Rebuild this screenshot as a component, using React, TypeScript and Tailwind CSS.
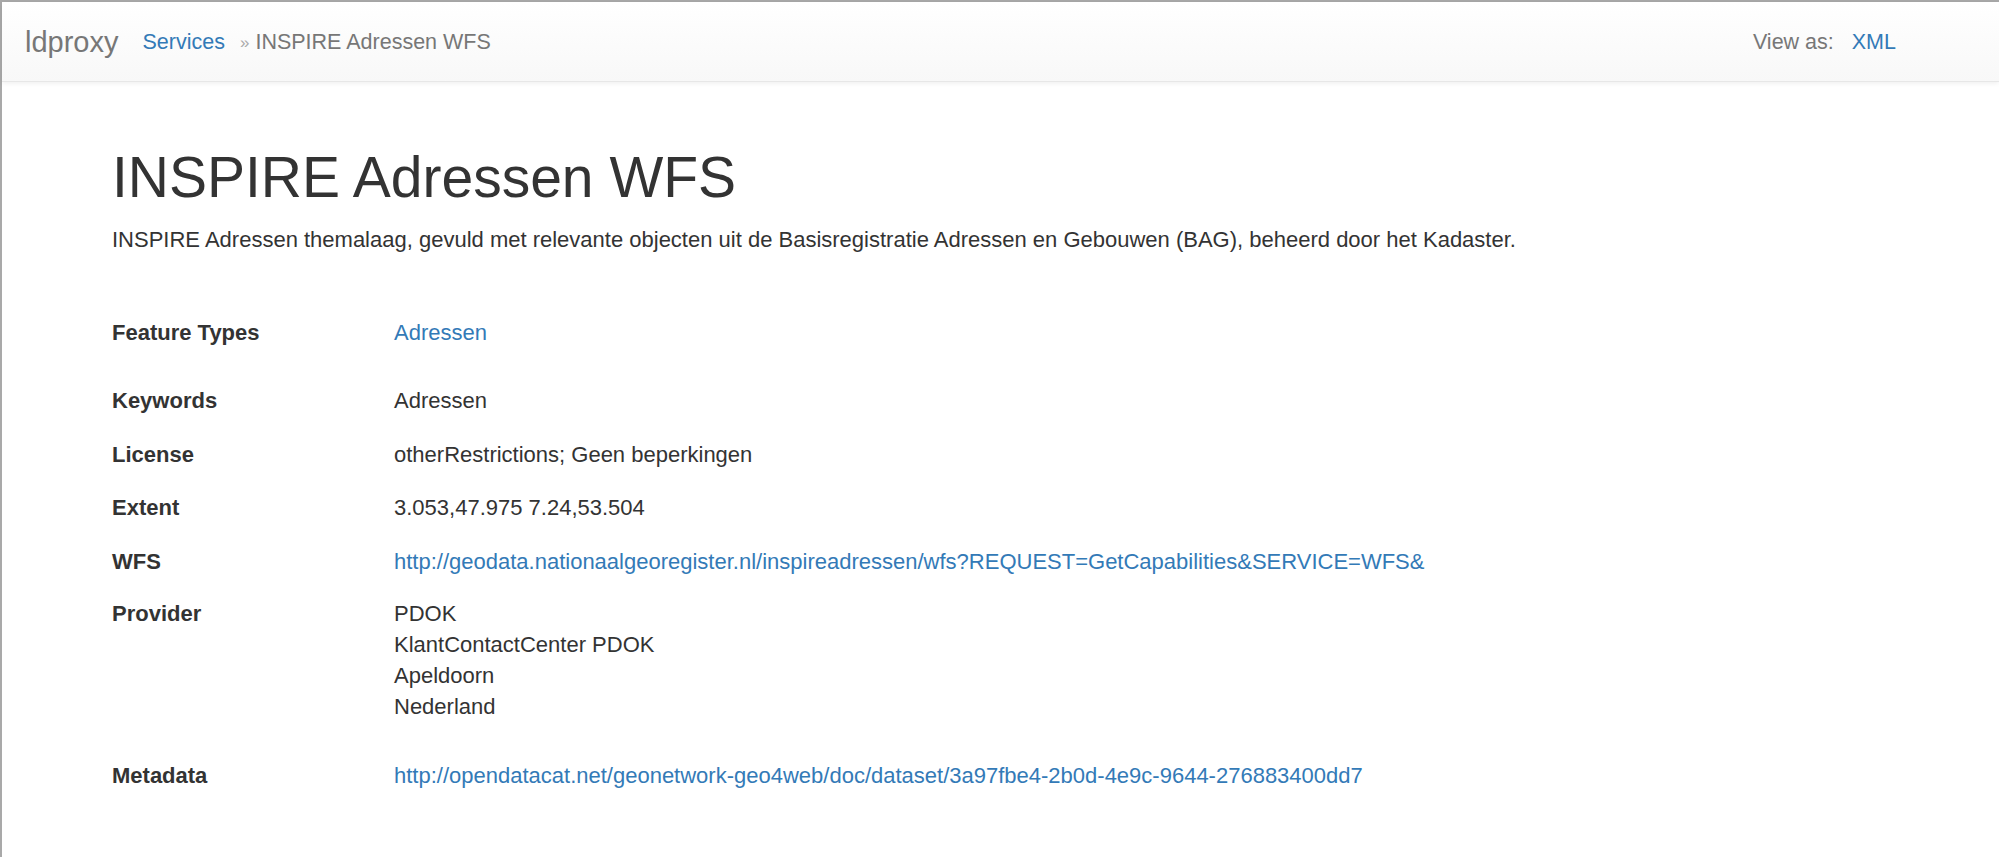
const rows: { label: string; lines: string[]; link?: boolean; mt: string }[] = [
  { label: "Feature Types", lines: ["Adressen"], link: true, mt: "mt-[62px]" },
  { label: "Keywords", lines: ["Adressen"], mt: "mt-[37px]" },
  { label: "License", lines: ["otherRestrictions; Geen beperkingen"], mt: "mt-[23px]" },
  { label: "Extent", lines: ["3.053,47.975 7.24,53.504"], mt: "mt-[22px]" },
  {
    label: "WFS",
    lines: ["http://geodata.nationaalgeoregister.nl/inspireadressen/wfs?REQUEST=GetCapabilities&SERVICE=WFS&"],
    link: true,
    mt: "mt-[23px]",
  },
  {
    label: "Provider",
    lines: ["PDOK", "KlantContactCenter PDOK", "Apeldoorn", "Nederland"],
    mt: "mt-[21px]",
  },
  {
    label: "Metadata",
    lines: ["http://opendatacat.net/geonetwork-geo4web/doc/dataset/3a97fbe4-2b0d-4e9c-9644-276883400dd7"],
    link: true,
    mt: "mt-[38px]",
  },
];

function Navbar() {
  return (
    <nav className="h-[80px] flex items-center justify-between bg-gradient-to-b from-white to-[#f8f8f8] border-b border-[#e7e7e7] shadow-[0_1px_5px_rgba(0,0,0,0.075)]">
      <div className="flex items-center pl-[23px] pt-[2px]">
        <a href="#" className="text-[29px] text-[#777] leading-none">
          ldproxy
        </a>
        <a href="#" className="ml-[24px] text-[21.5px] text-[#337ab7]">
          Services
        </a>
        <span className="ml-[15px] mr-[6px] text-[17px] text-[#aaa]">»</span>
        <span className="text-[21.5px] text-[#777]">INSPIRE Adressen WFS</span>
      </div>
      <div className="flex items-center pr-[103px] pt-[2px] text-[21.5px]">
        <span className="text-[#777]">View as:</span>
        <a href="#" className="ml-[18px] text-[#337ab7]">
          XML
        </a>
      </div>
    </nav>
  );
}

export default function App() {
  return (
    <div className="min-h-[857px] bg-white border-t-2 border-l-2 border-[#a9a9a9] text-[#333] font-['Liberation_Sans',Arial,sans-serif]">
      <Navbar />
      <main className="pl-[110px] pr-10 pb-10">
        <h1 className="mt-[64px] text-[57px] leading-[62px]">INSPIRE Adressen WFS</h1>
        <p className="mt-[16px] text-[22px] leading-[31px]">
          INSPIRE Adressen themalaag, gevuld met relevante objecten uit de Basisregistratie Adressen en Gebouwen (BAG),
          beheerd door het Kadaster.
        </p>
        {rows.map((r) => (
          <div key={r.label} className={`flex text-[22px] leading-[31px] ${r.mt}`}>
            <div className="w-[282px] shrink-0 font-bold">{r.label}</div>
            <div>
              {r.lines.map((l) =>
                r.link ? (
                  <a key={l} href="#" className="block text-[#337ab7]">
                    {l}
                  </a>
                ) : (
                  <div key={l}>{l}</div>
                )
              )}
            </div>
          </div>
        ))}
      </main>
    </div>
  );
}
